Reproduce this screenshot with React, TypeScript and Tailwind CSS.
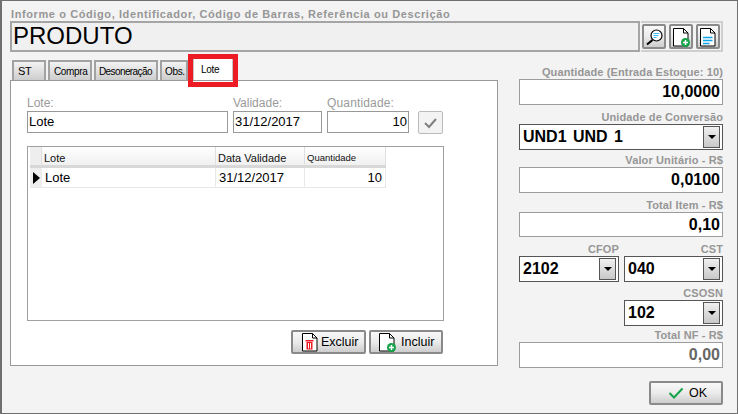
const tabs = [
  { label: "ST", w: "w-[34px]", text: "text-[11px] pl-[4px] tracking-[-0.35px]" },
  { label: "Compra", w: "w-[44px]", text: "text-[10px] pl-[4px] tracking-[-0.35px]" },
  { label: "Desoneração", w: "w-[64px]", text: "text-[10px] pl-[3px] tracking-[-0.6px]" },
  { label: "Obs.", w: "w-[28px]", text: "text-[10px] pl-[3px] tracking-[-0.35px]" },
];

const buttonBg = "bg-gradient-to-b from-[#f8f8f8] via-[#ebebeb] to-[#cdcdcd]";

function DocIcon({ children }: { children?: React.ReactNode }) {
  return (
    <svg width="20" height="20" viewBox="0 0 20 20" className="shrink-0">
      <path d="M2.500 1.500h10l4.500 4.500v13h-14.500z" fill="#fff" stroke="#000" />
      <path d="M12.500 1.500v4.500h4.500" fill="none" stroke="#000" />
      {children}
    </svg>
  );
}

const plusBadge = (
  <>
    <circle cx="14.500" cy="15.500" r="4.500" fill="#16a34a" />
    <path d="M12 15.500h5M14.500 13v5" stroke="#fff" strokeWidth="1.500" />
  </>
);

function Label({ children, className = "" }: { children: React.ReactNode; className?: string }) {
  return (
    <div className={`text-right text-[11px] leading-[14px] font-bold text-[#969696] tracking-[0.12px] ${className}`}>
      {children}
    </div>
  );
}

function ValueBox({ value, h, muted }: { value: string; h: string; muted?: boolean }) {
  return (
    <div
      className={`${h} flex items-center justify-end pr-[2px] border border-[#9c9c9c] bg-white text-[16px] font-bold ${
        muted ? "text-[#666]" : "text-black"
      }`}
    >
      {value}
    </div>
  );
}

function Select({ value, w }: { value: string; w: string }) {
  return (
    <div className={`${w} h-[26px] flex items-center justify-between border border-[#555] bg-white pl-[3px] pr-[2px] text-[16px] font-bold text-black [word-spacing:2px]`}>
      <span>{value}</span>
      <div className="w-[17px] h-[22px] flex items-center justify-center border border-[#555] bg-gradient-to-b from-[#f0f0f0] to-[#c8c8c8]">
        <div className="w-0 h-0 border-x-[4px] border-x-transparent border-t-[4px] border-t-black" />
      </div>
    </div>
  );
}

function ActionButton({ className, children }: { className: string; children: React.ReactNode }) {
  return (
    <button className={`${className} h-[24px] flex items-center rounded-[2px] border-2 border-[#8a8a8a] ${buttonBg} text-[12.500px] text-black`}>
      {children}
    </button>
  );
}

function ToolButton({ children }: { children: React.ReactNode }) {
  return (
    <div className={`w-[24px] h-[25px] flex items-center justify-center rounded-[2px] border-2 border-[#8a8a8a] ${buttonBg}`}>
      {children}
    </div>
  );
}

export default function App() {
  return (
    <div className="relative w-[738px] h-[414px] overflow-hidden bg-[#f3f3f3] border-t border-l-2 border-r border-b border-[#6f6f6f] font-['Liberation_Sans',Arial,sans-serif]">
      <div className="pl-[9px] pt-[7px] text-[11px] leading-[13px] font-bold text-[#969696] tracking-[0.6px]">
        Informe o Código, Identificador, Código de Barras, Referência ou Descrição
      </div>

      <div className="flex ml-[8px]">
        <div className="w-[630px] h-[31px] flex items-center pl-[1px] pb-[2px] border-2 border-[#a5a5a5] bg-[#f0f0f0] text-[24px] text-black">
          PRODUTO
        </div>
        <div className="ml-[1px] w-[82px] h-[31px] flex items-center gap-[3px] pl-[1px] border-y-2 border-r-2 border-[#cfcfcf]">
          <ToolButton>
            <svg width="20" height="20" viewBox="0 0 20 20">
              <circle cx="12.500" cy="8.500" r="5.500" fill="#fff" stroke="#000" strokeWidth="1.200" />
              <path d="M8.500 13l-5.500 4.500" stroke="#000" strokeWidth="2.200" />
              <path d="M9.500 6.500h6M9.500 8.500h5M9.500 10.500h3" stroke="#38bdf8" />
            </svg>
          </ToolButton>
          <ToolButton>
            <DocIcon>{plusBadge}</DocIcon>
          </ToolButton>
          <ToolButton>
            <DocIcon>
              <path d="M5 10.500h9.500M5 13.500h9.500M5 16.500h6.500" stroke="#0ea5e9" strokeWidth="1.500" />
            </DocIcon>
          </ToolButton>
        </div>
      </div>

      <div className="flex ml-[8px]">
        <div className="w-[488px] shrink-0">
          <div className="flex gap-[2px] items-end h-[28px] pl-[2px]">
            {tabs.map((t) => (
              <div
                key={t.label}
                className={`${t.w} ${t.text} h-[20px] pt-[1px] flex items-center border-2 border-b-0 border-[#a2a2a2] bg-gradient-to-b from-[#f3f3f3] to-[#cdcdcd] text-black whitespace-nowrap`}
              >
                {t.label}
              </div>
            ))}
            <div className="w-[40px] h-[24px] ml-[3px] pl-[7px] pt-[5px] border border-b-0 border-[#c4c4c4] bg-white text-[10px] text-black tracking-[-0.3px]">
              Lote
            </div>
          </div>

          <div className="h-[286px] border border-[#999] bg-white pl-[16px] pt-[14px]">
            <div className="flex gap-[5px]">
              <div className="w-[201px]">
                <div className="h-[16px] pt-[1px] text-[12px] leading-[14px] text-[#9a9a9a]">Lote:</div>
                <div className="h-[22px] flex items-center pl-[1px] border border-[#999] text-[13px] text-black">Lote</div>
              </div>
              <div className="w-[89px]">
                <div className="h-[16px] pt-[1px] text-[12px] leading-[14px] text-[#9a9a9a]">Validade:</div>
                <div className="h-[22px] flex items-center pl-[1px] border border-[#999] text-[13px] text-black">31/12/2017</div>
              </div>
              <div className="w-[82px]">
                <div className="h-[16px] pt-[1px] text-[12px] leading-[14px] text-[#9a9a9a] tracking-[0.15px]">Quantidade:</div>
                <div className="h-[22px] flex items-center justify-end pr-[1px] border border-[#999] text-[13px] text-black">10</div>
              </div>
              <div className="ml-[4px] mt-[16px] w-[25px] h-[23px] flex items-center justify-center rounded-[2px] border border-[#bbb] bg-[#f3f3f3]">
                <svg width="15" height="12" viewBox="0 0 15 12">
                  <path d="M2 6l4 4 7-8" fill="none" stroke="#808080" strokeWidth="2" />
                </svg>
              </div>
            </div>

            <div className="mt-[12px] w-[417px] h-[175px] border border-[#a0a0a0] pl-[2px]">
              <div className="flex h-[21px] w-[356px] text-[#111] text-[11px] border-b-[3px] border-[#d8d8d8]">
                <div className="w-[12px] bg-[#eee] border-r border-[#e0e0e0]" />
                <div className="w-[174px] pl-[2px] pt-[3px] bg-gradient-to-b from-white to-[#f0f0f0] border-r border-[#e0e0e0]">Lote</div>
                <div className="w-[89px] pl-[2px] pt-[3px] bg-gradient-to-b from-white to-[#f0f0f0] border-r border-[#e0e0e0]">Data Validade</div>
                <div className="w-[81px] pl-[2px] pt-[4px] text-[9.500px] bg-gradient-to-b from-white to-[#f0f0f0] border-r border-[#e0e0e0]">Quantidade</div>
              </div>
              <div className="flex h-[20px] w-[356px] items-center text-[13px] text-black border-b border-[#e8e8e8]">
                <div className="w-[12px] h-full flex items-center justify-end pr-[2px] bg-[#eee]">
                  <div className="w-0 h-0 border-y-[6px] border-y-transparent border-l-[7px] border-l-black" />
                </div>
                <div className="w-[174px] pl-[3px] border-r border-[#e8e8e8] h-full flex items-center">Lote</div>
                <div className="w-[89px] pl-[3px] border-r border-[#e8e8e8] h-full flex items-center">31/12/2017</div>
                <div className="w-[81px] pr-[3px] border-r border-[#e8e8e8] h-full flex items-center justify-end">10</div>
              </div>
            </div>

            <div className="flex justify-end gap-[3px] w-[416px] mt-[9px]">
              <ActionButton className="w-[75px] pl-[7px] gap-[1px]">
                <DocIcon>
                  <path d="M5.500 8h8v1.500h-8zM6.500 10h6v7.500h-6z" fill="#ef1c25" />
                  <path d="M8.500 11v5.500M10.500 11v5.500" stroke="#fff" />
                </DocIcon>
                Excluir
              </ActionButton>
              <ActionButton className="w-[74px] pl-[6px] gap-[4px]">
                <DocIcon>{plusBadge}</DocIcon>
                Incluir
              </ActionButton>
            </div>
          </div>
        </div>

        <div className="ml-[21px] w-[204px]">
          <Label className="mt-[13px]">Quantidade (Entrada Estoque: 10)</Label>
          <ValueBox value="10,0000" h="h-[26px]" />
          <Label className="mt-[5px]">Unidade de Conversão</Label>
          <Select value="UND1 UND 1" w="w-[204px]" />
          <Label className="mt-[3px]">Valor Unitário - R$</Label>
          <ValueBox value="0,0100" h="h-[26px]" />
          <Label className="mt-[5px]">Total Item - R$</Label>
          <ValueBox value="0,10" h="h-[25px]" />
          <div className="flex justify-between mt-[5px]">
            <div>
              <Label>CFOP</Label>
              <Select value="2102" w="w-[100px]" />
            </div>
            <div>
              <Label>CST</Label>
              <Select value="040" w="w-[99px]" />
            </div>
          </div>
          <div className="flex justify-end mt-[4px]">
            <div>
              <Label>CSOSN</Label>
              <Select value="102" w="w-[99px]" />
            </div>
          </div>
          <Label className="mt-[2px]">Total NF - R$</Label>
          <ValueBox value="0,00" h="h-[26px]" muted />
          <div className="flex justify-end mt-[13px]">
            <ActionButton className="w-[74px] pl-[17px] gap-[5px]">
              <svg width="16" height="12" viewBox="0 0 16 12">
                <path d="M1.500 6l4.500 4.500 8.500-9" fill="none" stroke="#16a34a" strokeWidth="2" />
              </svg>
              OK
            </ActionButton>
          </div>
        </div>
      </div>

      {/* destaque vermelho em volta da aba Lote */}
      <div className="absolute left-[186px] top-[53px] w-[50px] h-[33px] border-[5px] border-[#ed1c24]" />
    </div>
  );
}
